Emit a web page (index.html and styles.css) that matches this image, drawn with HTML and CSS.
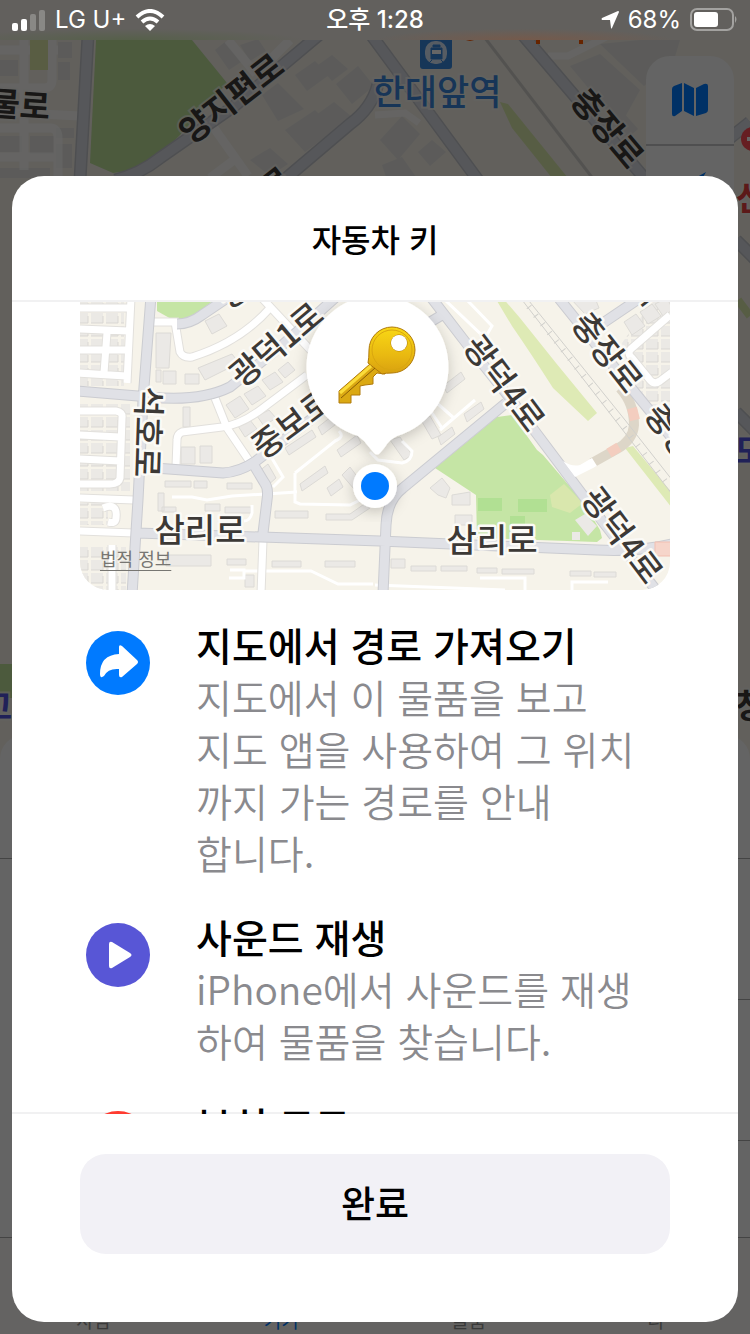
FILE: index.html
```
<!DOCTYPE html>
<html lang="ko">
<head>
  <meta charset="UTF-8">
  <meta name="viewport" content="width=device-width, initial-scale=1.0">
  <title>자동차 키</title>
  <link rel="stylesheet" href="styles.css">
</head>
<body>

  <!-- dimmed map screen behind the sheet -->
  <div class="backdrop" aria-hidden="true">
    <svg class="backdrop-map" viewBox="0 0 750 1334" preserveAspectRatio="xMidYMin slice">
      <rect width="750" height="1334" fill="#f4f0e7"/>
      <g fill="#e6e4e1">
        <path d="M0 60h18v16h-18zM58 42h14v16h-14zM58 62h12v18h-12zM56 128h18v10h-18zM30 136h24v18h-24zM0 136h22v16h-22zM56 144h16v24h-16zM0 168h50v10h-50z"/>
        <path d="M215 50l10-8 16 20-12 8zM240 45l18-6 8 12-16 10zM262 95l16-12 26 26-26 12zM295 75l20-14 14 14-22 16zM318 65l14-10 16 14-16 12zM336 84l22-18 16 20-22 18zM285 130l30-20 20 20-30 22zM312 118l22-16 24 20-22 18zM250 160l20-12 18 16-18 12zM380 140l22-24 18 18-22 26zM418 152l14-12 14 12-16 14zM382 165l20-8 14 20h-30z"/>
        <path d="M570 66l30-12 40 36-20 36zM600 44l40-4 34 20-30 26zM640 40h40l-6 20zM606 125l16-14 16 18-14 12z"/>
      </g>
      <g fill="none" stroke="#fff" stroke-opacity=".7" stroke-width="9">
        <path d="M0 50h58M24 40v130M52 40v40q0 8-8 8h-44M0 112l80 4M0 128h50q8 0 8 10v40M0 157h58M228 40l28 34M214 128l34 48M234 160l-24 18M270 60l20-20"/>
        <path d="M548 56h20l40-20M375 115l30-2 14 10" stroke-width="7"/>
      </g>
      <path d="M96 40H192L227 83 180 135Q150 166 135 170L113 173 90 163Z" fill="#bde09a"/>
      <path d="M30 40h18v30h-18z" fill="#dfe9a9"/>
      <path d="M500 102l8 2 60 74h-16l-40-50z" fill="#d9e9ab"/>
      <path id="bg-roads" d="M88 36L80 180M115 180Q140 174 160 158L233 107 320 34M284 180L350 124Q372 108 378 84M372 36L478 180M522 34L646 180M730 138l20-16M736 240l20 20M736 412l20 20" fill="none" stroke="#c3c5cb" stroke-width="13"/>
      <path d="M88 36L80 180M115 180Q140 174 160 158L233 107 320 34M284 180L350 124Q372 108 378 84M372 36L478 180M522 34L646 180M730 138l20-16M736 240l20 20M736 412l20 20" fill="none" stroke="#d8dae0" stroke-width="10"/>
      <path d="M485 38L594 180" stroke="#d0cec9" stroke-width="3" fill="none"/>
      <path d="M738 300l12 16" stroke="#d9e9ab" stroke-width="8"/>
      <path d="M0 664h12v34H0z" fill="#bde09a"/>
      <g class="bg-label">
        <text x="20" y="103" transform="rotate(4 20 103)">물로</text>
        <text x="230" y="97" transform="rotate(-38 230 97)">양지편로</text>
        <text x="609" y="127" transform="rotate(50 609 127)">충장로</text>
        <text x="274" y="182" transform="rotate(-38 274 182)">로</text>
        <text x="751" y="704">창</text>
      </g>
      <text class="bg-station" x="437" y="89">한대앞역</text>
      <text class="bg-red" x="751" y="196">신</text>
      <text class="bg-navy" x="750" y="449">모</text>
      <text class="bg-navy" x="-3" y="705">고</text>
      <circle cx="753" cy="139" r="12" fill="#ff4d55"/>
      <path d="M747 139h8" stroke="#fff" stroke-width="4"/>
      <g>
        <path d="M420 40h32v26q0 3-3 3h-26q-3 0-3-3z" fill="#3887dc"/>
        <rect x="425" y="41" width="22" height="23" rx="10" fill="#fff" opacity=".8"/>
        <path d="M431 48h11v11h-11zM433 45h7v2h-7zM432 60l-3 3M441 60l3 3" fill="#3887dc" stroke="#3887dc" stroke-width="1"/>
        <path d="M432 50h9v4h-9z" fill="#fff"/>
      </g>
      <g fill="#ff5a00"><circle cx="470" cy="32" r="9"/><path d="M536 40h4v4h-4zM579 40h4v4h-4z"/></g>
    </svg>

    <div class="map-controls">
      <div class="map-control">
        <svg width="36" height="34" viewBox="0 0 36 34" fill="#007aff">
          <path d="M0 6Q0 4 2 3L10 0V28L3 33Q0 34 0 31ZM12 0L22 5V33L12 28ZM24 5L32 1Q36 0 36 3V27Q36 29 34 30L24 33Z"/>
        </svg>
      </div>
      <div class="map-control">
        <svg width="36" height="34" viewBox="0 0 36 34" fill="#007aff"><path d="M34 0L16 32V18H2Z"/></svg>
      </div>
    </div>

    <div class="device-panel">
      <div class="panel-grip"></div>
      <div class="panel-row"></div>
      <div class="panel-row"></div>
      <div class="tab-bar">
        <span>사람</span>
        <span class="tab-active">기기</span>
        <span>물품</span>
        <span>나</span>
      </div>
    </div>
  </div>

  <div class="screen">
    <div class="status-bar">
      <div class="status-left">
        <svg width="34" height="22" viewBox="0 0 34 22" fill="#fff">
          <rect x="0" y="14" width="6" height="8" rx="2"/>
          <rect x="9" y="10" width="6" height="12" rx="2"/>
          <rect x="18" y="5" width="6" height="17" rx="2" opacity=".25"/>
          <rect x="27" y="1" width="6" height="21" rx="2" opacity=".25"/>
        </svg>
        <span>LG U+</span>
        <svg width="30" height="22" viewBox="0 0 30 22">
          <g fill="none" stroke="#fff" stroke-width="4">
            <path d="M2 8Q15-4 28 8"/>
            <path d="M7 13Q15 6 23 13"/>
          </g>
          <path d="M10 17Q15 13 20 17L15 22Z" fill="#fff"/>
        </svg>
      </div>
      <div class="status-time">오후 1:28</div>
      <div class="status-right">
        <svg width="18" height="18" viewBox="0 0 18 18" fill="#fff"><path d="M17 0Q18 0 18 1L11 17Q10 18 10 17L9 9 1 9Q0 8 1 7Z"/></svg>
        <span>68%</span>
        <svg width="48" height="24" viewBox="0 0 48 24">
          <rect x="1" y="1" width="42" height="21" rx="6" fill="none" stroke="#a3a2a0" stroke-width="2"/>
          <rect x="4" y="4" width="24" height="15" rx="3" fill="#fff"/>
          <path d="M45 8Q48 11 45 15Z" fill="#a3a2a0"/>
        </svg>
      </div>
    </div>

    <main class="sheet">
      <header class="sheet-header">
        <h1>자동차 키</h1>
      </header>

      <div class="sheet-content">
        <div class="item-map">
          <svg viewBox="80 302 590 288" preserveAspectRatio="xMidYMid slice" role="img" aria-label="자동차 키 위치">
            <defs>
              <pattern id="houses" width="15" height="13" patternUnits="userSpaceOnUse">
                <path d="M1 1h12v10H1z" fill="#ebe9e5"/>
                <path d="M1 11h12V4" fill="none" stroke="#d9d7d3" stroke-width="1"/>
              </pattern>
              <filter id="soft" x="-30%" y="-30%" width="160%" height="160%">
                <feDropShadow dx="0" dy="4" stdDeviation="7" flood-color="#000" flood-opacity=".2"/>
              </filter>
              <linearGradient id="gold" x1="0" y1="0" x2="0" y2="1">
                <stop offset="0" stop-color="#f9d815"/>
                <stop offset=".6" stop-color="#e9b911"/>
                <stop offset="1" stop-color="#d8a010"/>
              </linearGradient>
              <path id="main-roads" d="M151 296L143 400 138 500 132 595M78 391L150 397Q200 402 230 387L280 347 336 297M155 468L223 473Q240 472 256 461L330 405M252 462L264 482Q269 488 267 500L263 533M137 533L380 541 597 550Q640 552 672 544M383 594L386 525Q387 500 403 488L506 403M430 296L470 348 513 402 603 522 656 590M442 315L400 340M177 324Q190 324 202 315L230 296M557 296L610 362 672 438M603 323L640 298"/>
              <path id="side-roads" d="M152 322H175L180 352Q183 358 192 357Q240 342 270 308M261 297L316 356M215 398L227 428 250 462M307 375L267 405Q242 425 222 427L182 432Q177 434 177 440L176 466M263 540L261 594M131 298L127 383M78 308H128M78 329L128 331M78 350H127M78 373L126 376M107 333L104 373M78 411H116Q123 412 122 418L120 478Q119 484 110 484H78M78 435L120 437M78 459L120 461M78 498L134 500M78 531L134 533M112 545V594M103 508Q118 502 116 518Q116 524 108 522M670 315L632 348Q626 353 632 358L650 380Q654 385 660 381L672 372"/>
            </defs>
            <rect x="70" y="290" width="610" height="310" fill="#f6f3ea"/>
            <path d="M80 298h44v88h-44zM80 403h50v88h-50zM80 503h28v22h-28zM80 545h46v45h-46z" fill="url(#houses)"/>
            <path d="M655 298h20v135l-45-55-8-35z" fill="url(#houses)"/>
            <g fill="#ebe9e6" stroke="#dcdad6" stroke-width="1">
              <path d="M156 333h15l-2 35h-13zM205 321l14-7 8 12-15 8zM198 368l34-14 7 9-34 17zM185 374h14v10h-14zM163 371h13v13h-13zM183 407h7v20h-7zM181 447h14v17h-14zM200 446h12v17h-12zM156 370h5v12h-5z"/>
              <path d="M226 405l14-9 9 13-14 9zM244 394l14-8 8 10-14 9zM262 380l13-8 8 10-13 8zM278 370l10-8 7 8-10 8zM238 426l12-6 7 9-12 8zM257 416l12-6 7 8-12 8z"/>
              <path d="M165 481h26v6h-26zM194 481h13v7h-13zM227 483h25v6h-25zM205 504h15v7h-15zM225 507h26v6h-26zM158 493h6v18h-6zM162 507h14v5h-14zM275 511h33v7h-33zM326 514h24l20-14v8l-18 12h-26zM166 555h45v11h-45zM227 559h19v6h-19zM272 561h29v6h-29zM325 561h30v6h-30zM245 575h9v12h-9z"/>
              <path d="M300 484l25-18 3 7-26 18zM285 448l27-18 4 7-27 18zM318 427l18-14 4 8-18 14zM337 450l20-15 4 8-20 14zM327 488l12-9 4 8-12 9zM258 472l10-8 8 14-9 8zM342 475l8-8 12 16-8 6z"/>
              <path d="M443 386l18-14 4 7-18 14zM464 414l17-12 3 7-17 13zM438 437l14-10 3 7-14 11zM421 420l9-4 11 19-9 4zM390 440l10-3 12 18-8 5zM430 488l12-10 8 10-4 10-8-3zM452 495l18-3v13h-18zM455 515h17v10h-17zM411 566h25v5h-25zM441 566h26v5h-26zM477 568h20v5h-20zM502 569h32v5h-32zM570 571h21v5h-21zM594 572h22v5h-22zM391 559h14v9h-14z"/>
              <path d="M570 298h25l4 10-14 6zM624 322l12-8 9 12-13 9zM640 312l12-8 9 12-13 8zM655 304l12-6 6 12-10 6z"/>
            </g>
            <g fill="none" stroke="#fff" stroke-width="3">
              <path d="M172 497h20l15 3 25-4 65-4M295 473v29l5 2 50 1 24-12M295 473l40-32q10-4 4-10M270 455l13 22-10 10M252 505v8q-2 8-8 8M230 570h14v8h-15M244 571h67l27 13h35M430 397l25 22M440 430l35-30M430 410l12 18M370 452l8 8 24 3q10-2 10-12l-10-10M375 585l130 5M480 578h45v12M572 590v-8h36M445 300l40 38 7-12-25-26"/>
            </g>
            <path d="M157 296h62l-29 23q-10 3-17 1l-16-9z" fill="#c5e5a5"/>
            <path d="M435 468L497 417 512 415 537 450 543 455 583 502 600 530 602 538 597 542 477 538 476 495Z" fill="#c5e5a5"/>
            <path d="M478 498h24v13h-24zM518 499h29v13h-29zM510 516h15v10h-15z" fill="#b1e093"/>
            <path d="M564 484L550 495 552 507 570 513 583 503Z" fill="#d9e7ad"/>
            <path d="M575 520l10-6 12 12-9 10zM572 532h8v8h-8z" fill="#ebe9e6"/>
            <path d="M494 296h7L520 318 556 363 597 413 588 421 553 388Q530 352 512 326ZM625 448L633 446 672 493V508Z" fill="#deeab5"/>
            <g fill="none">
              <path d="M570 382" stroke="none"/>
              <path d="M620 388Q634 403 634 425Q633 440 617 449L592 463" stroke="#ddd6c8" stroke-width="10"/>
              <path d="M632 408l3 12M619 447l-10 6" stroke="#f3cdbf" stroke-width="10"/>
              <path d="M519 296L615 420 675 498M525 296L625 420 680 490" stroke="#d1d0cc" stroke-width="1"/>
              <path d="M522 298L620 422 672 490" stroke="#d1d0cc" stroke-width="6" stroke-dasharray="1 10"/>
              <use href="#side-roads" stroke="#e2e0dc" stroke-width="9"/>
              <use href="#side-roads" stroke="#fff" stroke-width="7"/>
              <use href="#main-roads" stroke="#cbccd1" stroke-width="11"/>
              <use href="#main-roads" stroke="#e0e1e6" stroke-width="9"/>
              <path d="M563 461Q572 467 580 465L592 458 597 466 575 477Z" fill="#fff"/>
              <path d="M655 542h20v14h-20z" fill="#f6d5ca" stroke="#f2bfb1"/>
            </g>
            <g class="road-label">
              <text x="275" y="343" transform="rotate(-40 275 343)">광덕1로</text>
              <text x="150" y="432" transform="rotate(92 150 432)">석호로</text>
              <text x="291" y="422" transform="rotate(-37 291 422)">중보로</text>
              <text x="200" y="528">삼리로</text>
              <text x="492" y="538">삼리로</text>
              <text x="506" y="382" transform="rotate(53 506 382)">광덕4로</text>
              <text x="624" y="534" transform="rotate(53 624 534)">광덕4로</text>
              <text x="609" y="351" transform="rotate(52 609 351)">충장로</text>
              <text x="682" y="442" transform="rotate(52 682 442)">충장로</text>
              <text x="232" y="290" transform="rotate(-38 232 290)">중</text>
              <text x="645" y="288" transform="rotate(-38 645 288)">로</text>
            </g>
            <!-- key pin -->
            <path d="M377 295a72 72 0 0 1 20 141Q389 440 385 447L380 453Q377 456 374 453L369 447Q364 440 358 436A72 72 0 0 1 377 295Z" fill="#fff" filter="url(#soft)"/>
            <g stroke="#b07a0a" stroke-width="1">
              <path d="M370 364L339 391V403H351L351 395H360L360 386L365 385 373 384 373 377 377 373 385 374 372 358Z" fill="#dba913"/>
              <path fill-rule="evenodd" d="M392 327a23 23 0 0 1 0 46q-6 0-10 1l-14-11q1-5 1-13a23 23 0 0 1 23-23zM399 335a8 8 0 1 0 .1 0z" fill="url(#gold)"/>
              <circle cx="392" cy="350" r="20" fill="none" stroke="#d9a60f"/>
            </g>
            <path d="M340 393L371 366" stroke="#fbdc3a" stroke-width="3"/>
            <path d="M341 398L375 368" stroke="#8a5d06" stroke-width="1"/>
            <circle cx="399" cy="343" r="8" fill="#fff"/>
            <circle cx="375" cy="486" r="22" fill="#fff" filter="url(#soft)"/>
            <circle cx="375" cy="486" r="14" fill="#007aff"/>
          </svg>
          <a class="legal" href="#legal">법적 정보</a>
        </div>

        <ul class="features">
          <li class="feature">
            <svg class="feature-icon" viewBox="0 0 64 64">
              <circle cx="32" cy="32" r="32" fill="#007aff"/>
              <path d="M33 16Q33 13 36 15L51 29Q53 31 51 33L36 46Q33 47 33 44V38Q22 37 18 45Q14 48 14 43Q14 24 33 23Z" fill="#fff"/>
            </svg>
            <div>
              <h2>지도에서 경로 가져오기</h2>
              <p>지도에서 이 물품을 보고<br>지도 앱을 사용하여 그 위치<br>까지 가는 경로를 안내<br>합니다.</p>
            </div>
          </li>
          <li class="feature">
            <svg class="feature-icon" viewBox="0 0 64 64">
              <circle cx="32" cy="32" r="32" fill="#5856d6"/>
              <path d="M23 21Q23 18 26 19L44 30Q47 32 44 34L26 45Q23 46 23 43Z" fill="#fff"/>
            </svg>
            <div>
              <h2>사운드 재생</h2>
              <p>iPhone에서 사운드를 재생<br>하여 물품을 찾습니다.</p>
            </div>
          </li>
          <li class="feature">
            <svg class="feature-icon" viewBox="0 0 64 64">
              <circle cx="32" cy="32" r="32" fill="#ff3b30"/>
            </svg>
            <div>
              <h2>분실 모드</h2>
            </div>
          </li>
        </ul>
      </div>

      <footer class="sheet-footer">
        <button class="done" type="button">완료</button>
      </footer>
    </main>
  </div>

</body>
</html>
```
FILE: styles.css
```
* {
  box-sizing: border-box;
}

body {
  margin: 0;
  height: 100vh;
  overflow: hidden;
  background: #646464;
  color: #000;
  font-family: "Noto Sans CJK KR", "Noto Sans", sans-serif;
}

h1, h2, p, ul {
  margin: 0;
  padding: 0;
}

/* screen behind the sheet */
.backdrop {
  position: absolute;
  inset: 0;
  display: flex;
  flex-direction: column;
  overflow: hidden;
}

.backdrop::after {
  content: '';
  position: absolute;
  inset: 0;
  background: rgba(0, 0, 0, 0.6);
}

.backdrop-map {
  position: absolute;
  inset: 0;
  width: 100%;
  height: 100%;
}

.bg-label text,
.bg-station,
.bg-red,
.bg-navy {
  font-size: 33px;
  font-weight: 700;
  fill: #3c3a38;
  stroke: #f8f6f0;
  stroke-opacity: 0.7;
  stroke-width: 4px;
  paint-order: stroke;
  text-anchor: middle;
  dominant-baseline: central;
}

.bg-station {
  font-size: 35px;
  font-weight: 500;
  fill: #3a84da;
}

.bg-red {
  fill: #e5403f;
}

.bg-navy {
  fill: #5253dd;
}

.map-controls {
  position: relative;
  align-self: flex-end;
  width: 88px;
  margin: 56px 16px 0 0;
  border-radius: 24px;
  background: #fafafa;
}

.map-control {
  display: flex;
  align-items: center;
  justify-content: center;
  height: 88px;
}

.map-control + .map-control {
  height: 88px;
  border-top: 2px solid #c6c6c8;
}

.device-panel {
  position: relative;
  margin-top: auto;
  border-radius: 24px 24px 0 0;
  background: #fafafa;
}

.panel-grip {
  height: 124px;
  border-bottom: 1px solid #aaa;
}

.panel-row {
  height: 141px;
  margin-left: 160px;
  border-bottom: 1px solid #aaa;
}

.tab-bar {
  display: grid;
  grid-template-columns: repeat(4, 1fr);
  align-items: end;
  height: 97px;
  margin-top: 96px;
  padding-bottom: 2px;
  border-top: 1px solid #aaa;
  background: #f9f8f4;
  color: #929292;
  font-size: 19px;
  line-height: 24px;
  text-align: center;
}

.tab-active {
  color: #007aff;
}

.screen {
  position: relative;
  display: flex;
  flex-direction: column;
  height: 100vh;
}

.status-bar {
  display: grid;
  grid-template-columns: 1fr auto 1fr;
  align-items: center;
  flex: none;
  height: 40px;
  padding: 0 12px;
  background:
    radial-gradient(ellipse at 17% 100%, #56604a, transparent 20%),
    radial-gradient(ellipse at 70% 100%, #755a4b, transparent 20%),
    #62605d;
  color: #fff;
  font-family: Inter, "Noto Sans CJK KR", sans-serif;
  font-size: 24px;
  line-height: 40px;
}

.status-left,
.status-right {
  display: flex;
  align-items: center;
  gap: 9px;
}

.status-right {
  justify-content: flex-end;
}

.status-time {
  font-weight: 500;
}

/* sheet */
.sheet {
  display: flex;
  flex: 1;
  flex-direction: column;
  min-height: 0;
  margin: 136px 12px 12px;
  border-radius: 32px;
  background: #fff;
  overflow: hidden;
}

.sheet-header {
  flex: none;
  padding: 38px 0;
  border-bottom: 2px solid #f1f1f2;
  text-align: center;
}

.sheet-header h1 {
  font-size: 32px;
  font-weight: 500;
  line-height: 48px;
}

.sheet-content {
  flex: 1;
  min-height: 0;
  padding: 0 68px;
  overflow: hidden;
  box-shadow: inset 0 -2px 0 #f1f1f2;
}

.item-map {
  position: relative;
  height: 288px;
  border-radius: 0 0 28px 28px;
  overflow: hidden;
}

.item-map svg {
  display: block;
  width: 100%;
  height: 100%;
}

.road-label text {
  font-size: 33px;
  font-weight: 500;
  fill: #3c3936;
  stroke: #fbfaf6;
  stroke-width: 5px;
  stroke-linejoin: round;
  paint-order: stroke;
  text-anchor: middle;
  dominant-baseline: central;
}

.legal {
  position: absolute;
  left: 20px;
  bottom: 18px;
  color: #777672;
  font-size: 18px;
  line-height: 28px;
  text-decoration: underline;
  text-underline-offset: 4px;
}

.features {
  list-style: none;
  margin-top: 28px;
  padding-left: 6px;
}

.feature {
  display: flex;
  gap: 46px;
  margin-bottom: 32px;
}

.feature-icon {
  flex: none;
  width: 64px;
  height: 64px;
  margin-top: 13px;
}

.feature h2 {
  font-size: 39px;
  font-weight: 500;
  line-height: 52px;
}

.feature p {
  color: #8a8a8e;
  font-size: 39px;
  font-weight: 350;
  line-height: 52px;
}

.sheet-footer {
  flex: none;
  padding: 40px 68px 68px;
}

.done {
  display: block;
  width: 100%;
  height: 100px;
  padding: 0 0 4px;
  border: none;
  border-radius: 26px;
  background: #f2f1f6;
  color: #000;
  font-family: inherit;
  font-size: 37px;
  font-weight: 500;
  cursor: pointer;
}
```
